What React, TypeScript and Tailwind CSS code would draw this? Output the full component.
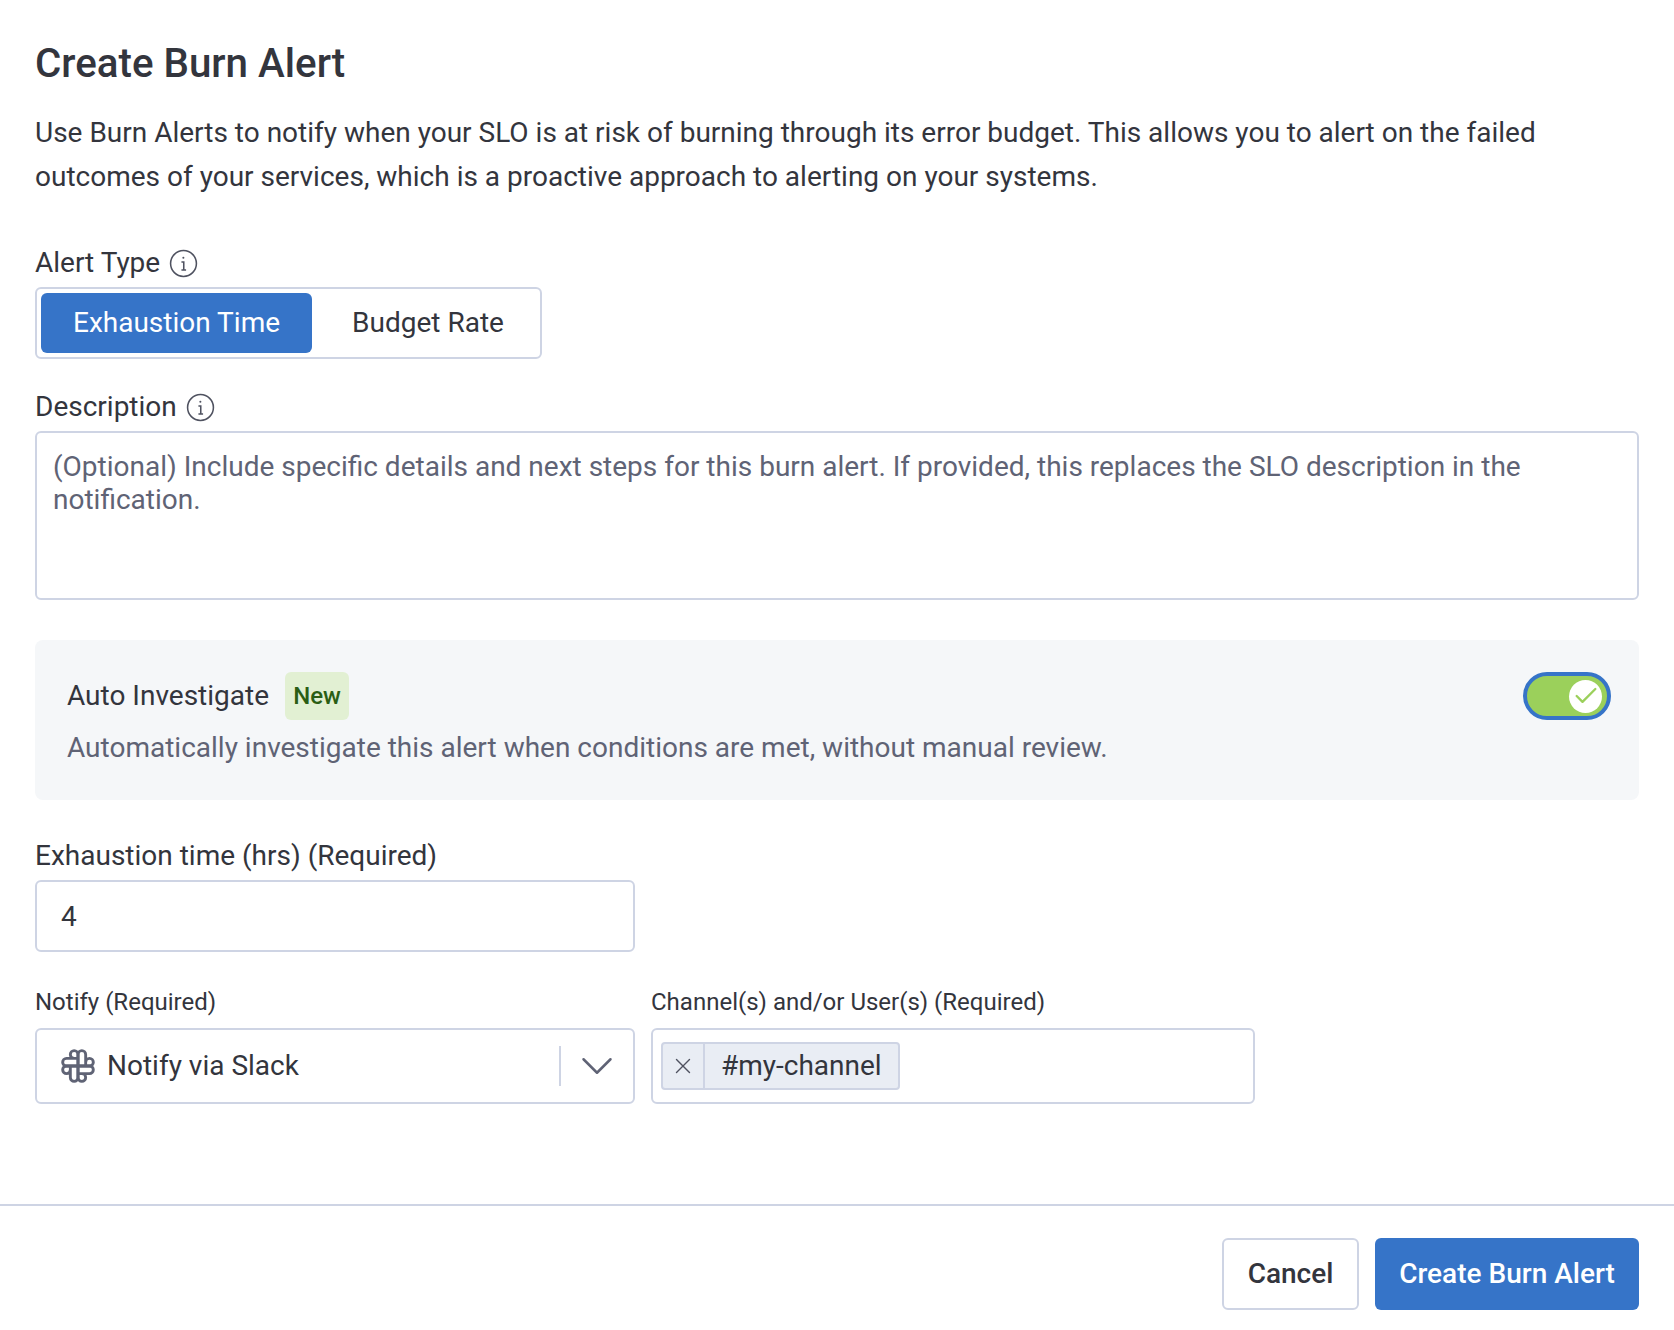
import { Check, ChevronDown, X } from 'lucide-react';
import { TbBrandSlack } from 'react-icons/tb';

const fieldBorder = 'rounded-[6px] border-2 border-[#ced4e4] bg-white';

function InfoIcon() {
  return (
    <svg width="31" height="31" viewBox="0 0 24 24" fill="none" stroke="#4f5260" strokeWidth="1.2">
      <circle cx="12" cy="12" r="10" />
      <path d="M10.4 10.8H12.2V17M10.4 17H14" />
      <circle cx="11.9" cy="7.6" r="0.8" fill="#4f5260" stroke="none" />
    </svg>
  );
}

function Label({ text, info }: { text: string; info?: boolean }) {
  return (
    <div className="flex h-[36px] items-center gap-[8px] text-[28px] text-[#33353d]">
      <span>{text}</span>
      {info && <InfoIcon />}
    </div>
  );
}

export default function App() {
  return (
    <div className="flex h-[1330px] w-full flex-col bg-white font-['Roboto',sans-serif]">
      <div className="flex-1 px-[35px] pt-[42px]">
        <h1 className="h-[44px] text-[40.3px] leading-[44px] font-medium text-[#33353d]">Create Burn Alert</h1>
        <p className="mt-[25px] text-[28px] leading-[44px] text-[#33353d]">
          Use Burn Alerts to notify when your SLO is at risk of burning through its error budget. This allows you to
          alert on the failed
          <br />
          outcomes of your services, which is a proactive approach to alerting on your systems.
        </p>

        <div className="mt-[46px]">
          <Label text="Alert Type" info />
        </div>
        <div className={`mt-[6px] flex h-[72px] w-[507px] items-center p-[4px] ${fieldBorder}`}>
          <div className="flex h-[60px] w-[271px] items-center justify-center rounded-[6px] bg-[#3674c8] text-[28px] text-white">
            Exhaustion Time
          </div>
          <div className="flex flex-1 items-center justify-center pl-[8px] text-[28px] text-[#33353d]">Budget Rate</div>
        </div>

        <div className="mt-[30px]">
          <Label text="Description" info />
        </div>
        <div
          className={`mt-[6px] h-[169px] px-[16px] pt-[17px] text-[28px] leading-[33px] text-[#5f6375] ${fieldBorder}`}
        >
          (Optional) Include specific details and next steps for this burn alert. If provided, this replaces the SLO
          description in the notification.
        </div>

        <div className="mt-[40px] flex h-[160px] items-start justify-between rounded-[8px] bg-[#f5f7f9] pt-[32px] pr-[28px] pl-[32px]">
          <div>
            <div className="flex h-[48px] items-center">
              <span className="text-[28px] text-[#33353d]">Auto Investigate</span>
              <span className="ml-[16px] flex h-[48px] w-[64px] items-center justify-center rounded-[6px] bg-[#e2f0d3] text-[24px] font-medium text-[#2a5e14]">
                New
              </span>
            </div>
            <p className="mt-[8px] text-[28px] leading-[40px] text-[#5f6375]">
              Automatically investigate this alert when conditions are met, without manual review.
            </p>
          </div>
          <div className="flex h-[48px] w-[88px] items-center justify-end rounded-full border-[4px] border-[#3674c8] bg-[#9bd05b] pr-[5px]">
            <span className="flex h-[33px] w-[33px] items-center justify-center rounded-full bg-white">
              <Check size={28} strokeWidth={2} className="text-[#9bd05b]" />
            </span>
          </div>
        </div>

        <div className="mt-[38px]">
          <Label text="Exhaustion time (hrs) (Required)" />
        </div>
        <div className={`mt-[6px] flex h-[72px] w-[600px] items-center px-[24px] pt-[1px] text-[28px] text-[#33353d] ${fieldBorder}`}>
          4
        </div>

        <div className="mt-[32px] flex gap-[16px]">
          <div className="w-[600px]">
            <div className="flex h-[36px] items-center text-[24px] text-[#33353d]">Notify (Required)</div>
            <div className={`mt-[8px] flex h-[76px] items-center pr-[9px] pl-[18px] ${fieldBorder}`}>
              <TbBrandSlack size={46} strokeWidth={1.5} className="text-[#5f6375]" />
              <span className="ml-[6px] flex-1 text-[28px] text-[#33353d]">Notify via Slack</span>
              <span className="h-[40px] w-[2px] bg-[#ced4e4]" />
              <ChevronDown size={54} strokeWidth={1.1} className="ml-[9px] text-[#5f6375]" />
            </div>
          </div>
          <div className="w-[604px]">
            <div className="flex h-[36px] items-center text-[24px] text-[#33353d]">
              Channel(s) and/or User(s) (Required)
            </div>
            <div className={`mt-[8px] flex h-[76px] items-center px-[8px] ${fieldBorder}`}>
              <div className="flex h-[48px] items-stretch rounded-[4px] border-2 border-[#ced4e4] bg-[#e9edf4]">
                <span className="flex w-[42px] items-center justify-center border-r-2 border-[#ced4e4]">
                  <X size={26} strokeWidth={1.3} className="text-[#4f5260]" />
                </span>
                <span className="flex items-center px-[16px] text-[28px] text-[#33353d]">#my-channel</span>
              </div>
            </div>
          </div>
        </div>
      </div>

      <div className="flex h-[126px] items-start justify-end gap-[16px] border-t-2 border-[#ced4e4] px-[35px] pt-[32px]">
        <button className="h-[72px] w-[137px] rounded-[6px] border-2 border-[#ced4e4] bg-white text-[28px] font-medium text-[#33353d]">
          Cancel
        </button>
        <button className="h-[72px] w-[264px] rounded-[6px] bg-[#3674c8] text-[28px] font-medium text-white">
          Create Burn Alert
        </button>
      </div>
    </div>
  );
}
